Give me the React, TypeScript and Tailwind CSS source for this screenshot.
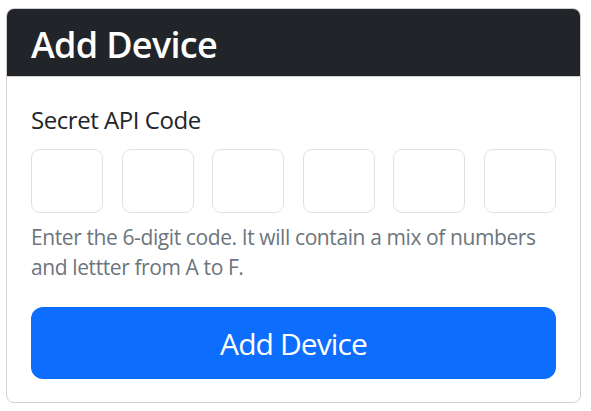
import React from 'react'

export default function App() {
  const boxes = [0, 1, 2, 3, 4, 5]

  return (
    <div className="min-h-screen bg-white pl-[6px] pt-[8px] font-['Open_Sans',sans-serif]">
      <div className="w-[575px] rounded-[8px] border border-[#d0d0d0] overflow-hidden">
        <div className="bg-[#212529] px-[24px] pt-[14px] pb-[10px] border-b border-[#d0d0d0]">
          <h4 className="text-[36px] leading-[43px] font-semibold tracking-[-0.7px] text-white">Add Device</h4>
        </div>
        <div className="px-[24px] pt-[25px] pb-[23px]">
          <label className="block text-[24px] leading-[36px] tracking-[-0.45px] text-[#212529] mb-[11px]">
            Secret API Code
          </label>
          <div className="flex justify-between">
            {boxes.map((b) => (
              <input
                key={b}
                type="text"
                maxLength={1}
                className="w-[72px] h-[64px] rounded-[9px] border border-[#dee2e6] bg-white text-center text-[24px] outline-none"
              />
            ))}
          </div>
          <p className="mt-[9px] text-[21px] leading-[30px] tracking-[-0.4px] text-[#6c757d]">
            Enter the 6-digit code. It will contain a mix of numbers and lettter from A to F.
          </p>
          <button
            type="button"
            className="mt-[25px] w-full h-[72px] rounded-[12px] bg-[#0d6efd] text-white text-[30px] leading-[45px] tracking-[-0.9px]"
          >
            Add Device
          </button>
        </div>
      </div>
    </div>
  )
}
